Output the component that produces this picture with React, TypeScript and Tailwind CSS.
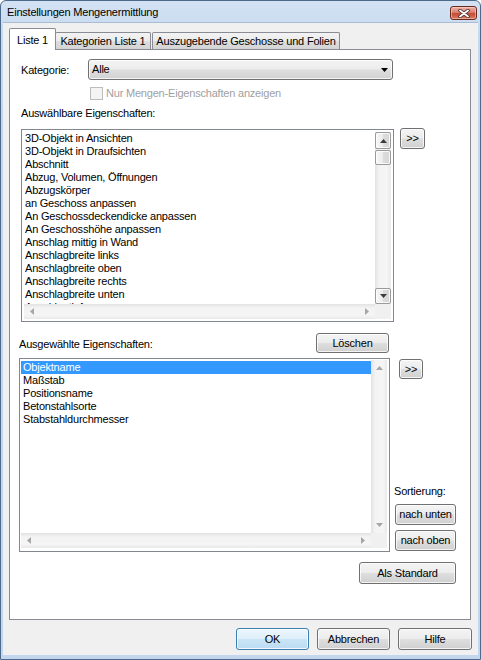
import React from "react";

const BTN =
  "flex items-center justify-center rounded-[3px] border border-[#707070] bg-[linear-gradient(180deg,#f4f4f4_0%,#ececec_48%,#dedede_52%,#d0d0d0_100%)] shadow-[inset_0_0_0_1px_rgba(255,255,255,0.75)] text-[11px] leading-[13px] text-black";

function Btn({ children, className = "" }: { children: React.ReactNode; className?: string }) {
  return <div className={`${BTN} ${className}`}>{children}</div>;
}

function Tri({ dir, color }: { dir: "up" | "down" | "left" | "right"; color: string }) {
  const d =
    dir === "up"
      ? "M0 4 L3.5 0 L7 4 Z"
      : dir === "down"
      ? "M0 0 L7 0 L3.5 4 Z"
      : dir === "left"
      ? "M4 0 L4 7 L0 3.5 Z"
      : "M0 0 L4 3.5 L0 7 Z";
  const w = dir === "up" || dir === "down" ? 7 : 4;
  const h = dir === "up" || dir === "down" ? 4 : 7;
  return (
    <svg width={w} height={h} viewBox={`0 0 ${w} ${h}`}>
      <path d={d} fill={color} />
    </svg>
  );
}

const VTRACK = "bg-[linear-gradient(90deg,#e2e2e2_0%,#f3f3f3_25%,#f5f5f5_75%,#e9e9e9_100%)]";
const HTRACK = "bg-[linear-gradient(180deg,#e2e2e2_0%,#f3f3f3_25%,#f5f5f5_75%,#e9e9e9_100%)]";
const SBTN =
  "rounded-[2px] border border-[#9a9a9a] bg-[linear-gradient(90deg,#f6f6f6_0%,#ececec_50%,#dcdcdc_51%,#d6d6d6_100%)] shadow-[inset_0_0_0_1px_rgba(255,255,255,0.8)]";

function VScrollEnabled() {
  return (
    <div className={`flex w-[16px] flex-col ${VTRACK}`}>
      <div className={`flex h-[17px] items-center justify-center ${SBTN}`}>
        <Tri dir="up" color="#3c3c3c" />
      </div>
      <div className={`mt-px h-[15px] ${SBTN}`} />
      <div className="flex-1" />
      <div className={`flex h-[16px] items-center justify-center ${SBTN}`}>
        <Tri dir="down" color="#3c3c3c" />
      </div>
    </div>
  );
}

function VScrollDisabled() {
  return (
    <div className={`flex w-[16px] flex-col items-center justify-between py-[6px] ${VTRACK}`}>
      <Tri dir="up" color="#a6a6a6" />
      <Tri dir="down" color="#a6a6a6" />
    </div>
  );
}

function HScrollDisabled({ className = "" }: { className?: string }) {
  return (
    <div className={`flex h-[15px] flex-1 items-center justify-between px-[6px] ${HTRACK} ${className}`}>
      <Tri dir="left" color="#a6a6a6" />
      <Tri dir="right" color="#a6a6a6" />
    </div>
  );
}

const list1 = [
  "3D-Objekt in Ansichten",
  "3D-Objekt in Draufsichten",
  "Abschnitt",
  "Abzug, Volumen, Öffnungen",
  "Abzugskörper",
  "an Geschoss anpassen",
  "An Geschossdeckendicke anpassen",
  "An Geschosshöhe anpassen",
  "Anschlag mittig in Wand",
  "Anschlagbreite links",
  "Anschlagbreite oben",
  "Anschlagbreite rechts",
  "Anschlagbreite unten",
  "Anschlagtiefe",
];

const list2 = ["Objektname", "Maßstab", "Positionsname", "Betonstahlsorte", "Stabstahldurchmesser"];

export default function App() {
  return (
    <div className="h-[660px] w-[481px] overflow-hidden bg-white font-['Liberation_Sans',Arial,sans-serif] text-[11px] leading-[13px] tracking-[-0.2px] text-black">
      <div className="flex h-[660px] w-[481px] flex-col rounded-t-[6px] border border-[#4e6a8a] bg-[linear-gradient(180deg,#d3e2f3_0%,#c5d8ee_40px,#c2d6ed_100%)]">
        {/* Title bar */}
        <div className="flex h-[21px] shrink-0 items-center justify-between pl-[6px] pr-[3px]">
          <span className="mt-[2px] text-[11px] text-black">Einstellungen Mengenermittlung</span>
          <div className="mt-[3px] flex h-[14px] w-[27px] items-center justify-center rounded-[3px] border border-[#6b2a20] bg-[linear-gradient(180deg,#eab2a4_0%,#d98070_45%,#c44a34_55%,#d87a60_100%)] shadow-[inset_0_0_0_1px_rgba(255,220,210,0.5)]">
            <svg width="12" height="9" viewBox="0 0 12 9">
              <path d="M2 1.5 L10 7.5 M10 1.5 L2 7.5" stroke="#3a2a28" strokeWidth="3.4" strokeLinecap="round" />
              <path d="M2 1.5 L10 7.5 M10 1.5 L2 7.5" stroke="#ffffff" strokeWidth="1.8" strokeLinecap="round" />
            </svg>
          </div>
        </div>

        {/* Content */}
        <div className="mx-[2px] mb-[4px] flex flex-1 flex-col border-t border-[#a9bcd4] bg-[#f0f0f0]">
          {/* Tabs */}
          <div className="ml-[6px] mt-[5px] flex h-[21px] items-end">
            <div className="relative z-10 -mb-px flex h-[22px] w-[47px] items-start justify-center rounded-t-[2px] border-x border-t border-[#898c95] bg-white pt-[5px]">
              Liste 1
            </div>
            <div className="-ml-px flex h-[17px] w-[96px] items-start justify-center rounded-t-[2px] border-x border-t border-[#898c95] bg-[linear-gradient(180deg,#f3f3f3_0%,#ebebeb_50%,#dedede_51%,#d4d4d4_100%)] pt-[2px]">
              Kategorien Liste 1
            </div>
            <div className="ml-px flex h-[17px] w-[188px] items-start justify-center rounded-t-[2px] border-x border-t border-[#898c95] bg-[linear-gradient(180deg,#f3f3f3_0%,#ebebeb_50%,#dedede_51%,#d4d4d4_100%)] pt-[2px]">
              Auszugebende Geschosse und Folien
            </div>
          </div>

          {/* Tab panel */}
          <div className="ml-[6px] flex h-[571px] w-[462px] flex-col border border-[#898c95] bg-white">
            {/* Kategorie */}
            <div className="ml-[11px] mt-[9px] flex items-center">
              <span className="w-[67px] pt-[2px]">Kategorie:</span>
              <div className="flex h-[21px] w-[305px] items-center justify-between rounded-[3px] border border-[#707070] bg-[linear-gradient(180deg,#f4f4f4_0%,#ececec_48%,#dedede_52%,#d2d2d2_100%)] pl-[3px] pr-[4px] shadow-[inset_0_0_0_1px_rgba(255,255,255,0.75)]">
                <span>Alle</span>
                <svg width="7" height="4" viewBox="0 0 7 4">
                  <path d="M0 0 L7 0 L3.5 4 Z" fill="#000" />
                </svg>
              </div>
            </div>

            {/* Checkbox */}
            <div className="ml-[80px] mt-[7px] flex items-center">
              <div className="h-[13px] w-[13px] border border-[#bcbcbc] bg-[#f4f4f4]" />
              <span className="ml-[3px] text-[#a0a0a0]">Nur Mengen-Eigenschaften anzeigen</span>
            </div>

            <div className="ml-[11px] mt-[7px] h-[13px]">Auswählbare Eigenschaften:</div>

            {/* List 1 */}
            <div className="ml-[11px] mt-[8px] flex items-start">
              <div className="mt-px flex h-[193px] w-[373px] flex-col border border-[#828790] bg-white p-[2px]">
                <div className="flex min-h-0 flex-1">
                  <div className="min-w-0 flex-1 overflow-hidden pl-px">
                    {list1.map((t) => (
                      <div key={t} className="h-[13px] whitespace-nowrap">
                        {t}
                      </div>
                    ))}
                  </div>
                  <VScrollEnabled />
                </div>
                <div className="flex">
                  <HScrollDisabled />
                  <div className="h-[15px] w-[16px] bg-[#f0f0f0]" />
                </div>
              </div>
              <Btn className="ml-[6px] h-[21px] w-[25px]">&gt;&gt;</Btn>
            </div>

            {/* Ausgewählte */}
            <div className="ml-[9px] mt-[11px] flex w-[370px] items-center justify-between">
              <span className="pt-[3px]">Ausgewählte Eigenschaften:</span>
              <Btn className="h-[20px] w-[73px]">Löschen</Btn>
            </div>

            <div className="ml-[9px] mt-[5px] flex">
              <div className="flex h-[194px] w-[371px] flex-col border border-[#828790] bg-white p-px">
                <div className="flex min-h-0 flex-1">
                  <div className="min-w-0 flex-1 overflow-hidden pt-px">
                    {list2.map((t, i) => (
                      <div
                        key={t}
                        className={`h-[13px] whitespace-nowrap pl-[2px] ${i === 0 ? "bg-[#3399ff] text-white" : ""}`}
                      >
                        {t}
                      </div>
                    ))}
                  </div>
                  <VScrollDisabled />
                  <div className="w-px" />
                </div>
                <div className="mb-[2px] flex">
                  <HScrollDisabled />
                  <div className="h-[15px] w-[16px] bg-[#f0f0f0]" />
                  <div className="w-px" />
                </div>
              </div>
              <div className="ml-[4px] flex h-[194px] flex-col">
                <Btn className="ml-[5px] mt-px h-[20px] w-[24px]">&gt;&gt;</Btn>
                <div className="flex-1" />
                <div className="h-[13px]">Sortierung:</div>
                <Btn className="ml-px mt-[6px] h-[21px] w-[61px]">nach unten</Btn>
                <Btn className="mb-px ml-px mt-[5px] h-[21px] w-[61px]">nach oben</Btn>
              </div>
            </div>

            <div className="ml-[349px] mt-[10px]">
              <Btn className="h-[22px] w-[97px]">Als Standard</Btn>
            </div>
          </div>

          {/* Bottom buttons */}
          <div className="mr-[6px] mt-[8px] flex justify-end gap-[8px]">
            <div className="flex h-[22px] w-[73px] items-center justify-center rounded-[3px] border border-[#3c7fb1] bg-[linear-gradient(180deg,#edf6fc_0%,#deeffb_48%,#c9e4f6_52%,#bcdcf3_100%)] shadow-[inset_0_0_0_1px_rgba(255,255,255,0.8)]">
              OK
            </div>
            <Btn className="h-[22px] w-[73px]">Abbrechen</Btn>
            <Btn className="h-[22px] w-[74px]">Hilfe</Btn>
          </div>
        </div>
      </div>
    </div>
  );
}
